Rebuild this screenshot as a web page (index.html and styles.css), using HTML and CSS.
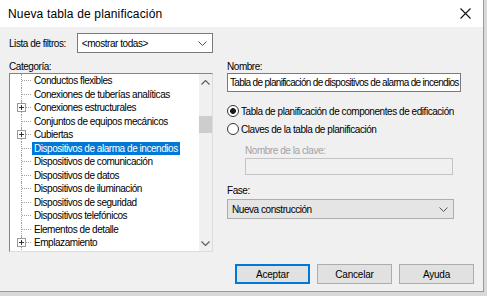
FILE: index.html
```html
<!DOCTYPE html>
<html lang="es">
<head>
  <meta charset="UTF-8">
  <title>Nueva tabla de planificación</title>
  <link rel="stylesheet" href="styles.css">
</head>
<body>
  <div class="dialog">
    <div class="titlebar">
      <span class="title">Nueva tabla de planificación</span>
      <span class="close">
        <svg width="11" height="11" viewBox="0 0 11 11"><path d="M0.5 0.5L10.5 10.5M10.5 0.5L0.5 10.5" stroke="#111" stroke-width="1.1" fill="none"/></svg>
      </span>
    </div>
    <div class="content">
      <div class="main">
        <div class="col-left">
          <div class="filter-row">
            <span class="label">Lista de filtros:</span>
            <div class="combo">
              <span class="combo-text">&lt;mostrar todas&gt;</span>
              <svg class="chevron" width="9" height="5" viewBox="0 0 9 5"><path d="M0.5 0.5L4.5 4.5L8.5 0.5" stroke="#555" fill="none"/></svg>
            </div>
          </div>
          <div class="field-label">Categoría:</div>
          <div class="tree">
            <ul class="tree-items">
              <li class="node"><span class="twig"></span><span class="text">Conductos flexibles</span></li>
              <li class="node"><span class="twig"></span><span class="text">Conexiones de tuberías analíticas</span></li>
              <li class="node"><span class="twig"><span class="plus"></span></span><span class="text">Conexiones estructurales</span></li>
              <li class="node"><span class="twig"></span><span class="text">Conjuntos de equipos mecánicos</span></li>
              <li class="node"><span class="twig"><span class="plus"></span></span><span class="text">Cubiertas</span></li>
              <li class="node selected"><span class="twig"></span><span class="text">Dispositivos de alarma de incendios</span></li>
              <li class="node"><span class="twig"></span><span class="text">Dispositivos de comunicación</span></li>
              <li class="node"><span class="twig"></span><span class="text">Dispositivos de datos</span></li>
              <li class="node"><span class="twig"></span><span class="text">Dispositivos de iluminación</span></li>
              <li class="node"><span class="twig"></span><span class="text">Dispositivos de seguridad</span></li>
              <li class="node"><span class="twig"></span><span class="text">Dispositivos telefónicos</span></li>
              <li class="node"><span class="twig"></span><span class="text">Elementos de detalle</span></li>
              <li class="node"><span class="twig"><span class="plus"></span></span><span class="text">Emplazamiento</span></li>
            </ul>
            <div class="scrollbar">
              <span class="arrow">
                <svg width="9" height="5" viewBox="0 0 9 5"><path d="M0.5 4.5L4.5 0.5L8.5 4.5" stroke="#606060" stroke-width="1.2" fill="none"/></svg>
              </span>
              <span class="track"><span class="thumb"></span></span>
              <span class="arrow">
                <svg width="9" height="5" viewBox="0 0 9 5"><path d="M0.5 0.5L4.5 4.5L8.5 0.5" stroke="#606060" stroke-width="1.2" fill="none"/></svg>
              </span>
            </div>
          </div>
        </div>

        <div class="col-right">
          <div class="field-label">Nombre:</div>
          <div class="textbox name">Tabla de planificación de dispositivos de alarma de incendios</div>

          <div class="radios">
            <div class="radio-row"><span class="radio checked"></span><span>Tabla de planificación de componentes de edificación</span></div>
            <div class="radio-row"><span class="radio"></span><span>Claves de la tabla de planificación</span></div>
          </div>

          <div class="key-group">
            <div class="field-label disabled">Nombre de la clave:</div>
            <div class="textbox disabled"></div>
          </div>

          <div class="field-label phase-label">Fase:</div>
          <div class="combo readonly">
            <span class="combo-text">Nueva construcción</span>
            <svg class="chevron" width="9" height="5" viewBox="0 0 9 5"><path d="M0.5 0.5L4.5 4.5L8.5 0.5" stroke="#555" fill="none"/></svg>
          </div>
        </div>
      </div>

      <div class="buttons">
        <button class="btn default">Aceptar</button>
        <button class="btn">Cancelar</button>
        <button class="btn">Ayuda</button>
      </div>
    </div>
  </div>
</body>
</html>
```

FILE: styles.css
```css
body {
  margin: 0;
  background: #d9d9d9;
  font-family: "Liberation Sans", Arial, sans-serif;
  font-size: 10px;
  color: #000;
}

.dialog {
  width: 483px;
  height: 291px;
  background: #f0f0f0;
  border-right: 1px solid #9a9a9a;
  border-bottom: 1px solid #9a9a9a;
  display: flex;
  flex-direction: column;
}

.titlebar {
  height: 27px;
  background: #fff;
  display: flex;
  align-items: center;
  justify-content: space-between;
  padding: 0 8px 0 8px;
}
.title {
  font-size: 12px;
  letter-spacing: 0.15px;
}
.close {
  display: flex;
  margin-right: 4px;
}

.content {
  padding: 6px 9px 0 9px;
  letter-spacing: -0.45px;
}

.main {
  display: flex;
  gap: 14px;
}
.col-left  { width: 204px; }
.col-right { width: 234px; padding-top: 27px; }

.filter-row {
  display: flex;
  align-items: center;
  gap: 11px;
}
.label { white-space: nowrap; }

.combo {
  flex: 1;
  height: 18px;
  background: #fff;
  border: 1px solid #7a7a7a;
  display: flex;
  align-items: center;
  justify-content: space-between;
  padding: 0 5px 0 4px;
}
.combo.readonly {
  background: #e5e5e5;
  border-color: #adadad;
  margin: 2px 7px 0 0;
}

.field-label {
  height: 13px;
  line-height: 13px;
  margin-top: 7px;
}
.col-right > .field-label:first-child { margin-top: 0; }
.field-label.disabled { color: #a3a3a3; margin-top: 0; }
.phase-label { margin-top: 9px; }

.tree {
  height: 177px;
  display: flex;
  background: #fff;
  border: 1px solid;
  border-color: #848484 #dcdcdc #dcdcdc #848484;
}
.tree-items {
  flex: 1;
  list-style: none;
  margin: 0;
  padding: 0;
}
.node {
  height: 13.5px;
  display: flex;
  align-items: stretch;
}
.twig {
  width: 9px;
  margin-left: 11px;
  border-left: 1px dotted #a0a0a0;
  background: repeating-linear-gradient(to right, #a0a0a0 0 1px, transparent 1px 2px) no-repeat left center / 100% 1px;
  display: flex;
  align-items: center;
}
.plus {
  width: 7px;
  height: 7px;
  margin-left: -5px;
  border: 1px solid #9a9a9a;
  background:
    linear-gradient(#333, #333) no-repeat center / 5px 1px,
    linear-gradient(#333, #333) no-repeat center / 1px 5px,
    #fff;
}
.text {
  line-height: 13.5px;
  padding: 0 2px 0 2px;
  margin-left: 1px;
  white-space: nowrap;
}
.selected .text {
  background: #0078d7;
  color: #fff;
}

.scrollbar {
  width: 13px;
  background: #f0f0f0;
  display: flex;
  flex-direction: column;
}
.arrow {
  height: 16px;
  display: flex;
  align-items: center;
  justify-content: center;
}
.track { flex: 1; padding-top: 26px; }
.thumb {
  display: block;
  height: 17px;
  background: #cdcdcd;
}

.textbox {
  height: 17px;
  line-height: 17px;
  background: #fff;
  border: 1px solid #7a7a7a;
  padding: 0 2px;
  white-space: nowrap;
  overflow: hidden;
}
.textbox.name { letter-spacing: -0.68px; }
.textbox.disabled {
  height: 15px;
  background: #f0f0f0;
  border-color: #c4c4c4;
  margin-top: 1px;
}

.radios {
  margin-top: 12px;
  display: flex;
  flex-direction: column;
  gap: 4px;
}
.radio-row {
  height: 14px;
  display: flex;
  align-items: center;
  gap: 2px;
}
.radio {
  width: 10px;
  height: 10px;
  border: 1px solid #333;
  border-radius: 50%;
  background: #fff;
}
.radio.checked {
  background: radial-gradient(circle, #1a1a1a 0 2.6px, #fff 3.2px);
}

.key-group {
  margin: 8px 8px 0 18px;
}

.buttons {
  display: flex;
  justify-content: flex-end;
  gap: 7px;
  margin-top: 12px;
}
.btn {
  width: 75px;
  height: 20px;
  font-family: inherit;
  font-size: 10px;
  letter-spacing: -0.2px;
  background: #e1e1e1;
  border: 1px solid #adadad;
  color: #000;
  padding: 0;
}
.btn.default {
  border: 2px solid #0078d7;
}
```
